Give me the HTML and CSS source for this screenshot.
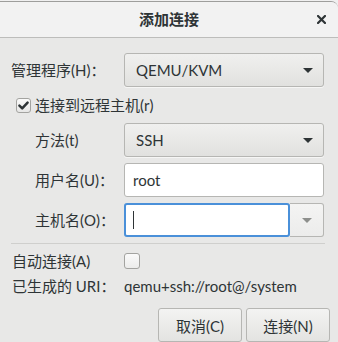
FILE: index.html
```html
<!DOCTYPE html>
<html lang="zh-CN">
<head>
<meta charset="utf-8">
<title>添加连接</title>
<link rel="stylesheet" href="styles.css">
</head>
<body>
<div class="window">
  <div class="header">
    <div></div>
    <div class="title">添加连接</div>
    <div class="close-wrap">
      <svg class="close" width="9" height="9" viewBox="0 0 9 9"><path d="M1 1L8 8M8 1L1 8" stroke="#2e3436" stroke-width="2.2" stroke-linecap="square" fill="none"/></svg>
    </div>
  </div>
  <div class="content">
    <div class="form">
      <div class="label">管理程序(H)：</div>
      <div class="combo"><span>QEMU/KVM</span><span class="arrow"></span></div>

      <div class="check-row">
        <svg class="cb" width="15" height="15" viewBox="0 0 15 15">
          <defs><linearGradient id="g1" x1="0" y1="0" x2="0" y2="1"><stop offset="0" stop-color="#fbfbfb"/><stop offset="1" stop-color="#e6e6e5"/></linearGradient></defs>
          <rect x="0.5" y="0.5" width="14" height="14" rx="2.5" fill="url(#g1)" stroke="#a3a3a0"/>
          <path d="M3.4 7.6L6.2 10.3L11.6 4.6" stroke="#2e3436" stroke-width="2.5" fill="none" stroke-linecap="round" stroke-linejoin="round"/>
        </svg>
        <span>连接到远程主机(r)</span>
      </div>

      <div class="label indent">方法(t)</div>
      <div class="combo"><span>SSH</span><span class="arrow"></span></div>

      <div class="label indent">用户名(U)：</div>
      <div class="entry"><span>root</span></div>

      <div class="label indent">主机名(O)：</div>
      <div class="entry-combo">
        <div class="entry focused"><span class="cursor"></span></div>
        <div class="drop"><span class="arrow dim"></span></div>
      </div>
    </div>

    <div class="sep"></div>

    <div class="form2">
      <div class="label small">自动连接(A)</div>
      <div class="cell"><span class="cb-empty"></span></div>
      <div class="label small">已生成的 URI：</div>
      <div class="cell uri">qemu+ssh://root@/system</div>
    </div>

    <div class="buttons">
      <div class="btn">取消(C)</div>
      <div class="btn">连接(N)</div>
    </div>
  </div>
</div>
</body>
</html>
```

FILE: styles.css
```css
html {
  background: #f0f0f0;
}
body {
  margin: 0;
  width: 338px;
  height: 342px;
  overflow: hidden;
  font-family: "Lato", "Noto Sans CJK SC", sans-serif;
  font-size: 15px;
  color: #2e3436;
  background: #f0f0f0;
}
.window {
  margin-top: 1px;
  border-top: 1px solid #9e9e9c;
  border-top-right-radius: 7px;
  background: #e8e8e7;
  height: 340px;
  overflow: hidden;
}
.header {
  height: 35px;
  border-bottom: 1px solid #bdbdbb;
  background: #f2f2f2;
  display: grid;
  grid-template-columns: 1fr auto 1fr;
  align-items: center;
}
.title {
  font-weight: bold;
  font-size: 15px;
  line-height: 1;
}
.close-wrap {
  display: flex;
  justify-content: flex-end;
  padding-right: 12px;
}
.close {
  display: block;
}
.content {
  padding: 15px 13px 0 11px;
}
.form {
  display: grid;
  grid-template-columns: 113px 200px;
  grid-template-rows: 34px 24px 34px 34px 34px;
  row-gap: 6px;
}
.label {
  align-self: center;
  line-height: 1;
  white-space: nowrap;
}
.label.indent {
  padding-left: 24px;
}
.label.small {
  padding-left: 1px;
}
.combo {
  display: flex;
  align-items: center;
  justify-content: space-between;
  padding: 0 10px 0 11px;
  border: 1px solid #b6b6b3;
  border-radius: 3px;
  background: linear-gradient(#f0f0ef, #e1e1df);
  box-shadow: 0 1px 0 rgba(255,255,255,0.6);
}
.arrow {
  width: 0;
  height: 0;
  border-left: 5px solid transparent;
  border-right: 5px solid transparent;
  border-top: 5px solid #2e3436;
}
.arrow.dim {
  border-top-color: #8d8f8c;
}
.check-row {
  grid-column: 1 / 3;
  display: flex;
  align-items: center;
  gap: 4px;
  padding-left: 5px;
  line-height: 1;
}
.cb {
  display: block;
}
.entry {
  display: flex;
  align-items: center;
  background: #fff;
  border: 1px solid #b6b6b3;
  border-radius: 3px;
  padding-left: 8px;
}
.entry-combo {
  display: flex;
}
.entry.focused {
  flex: 1;
  border: 2px solid #4a90d9;
  padding-left: 7px;
}
.cursor {
  width: 1px;
  height: 18px;
  background: #2e3436;
}
.drop {
  width: 33px;
  display: flex;
  align-items: center;
  justify-content: center;
  border: 1px solid #b6b6b3;
  border-left: none;
  border-radius: 0 3px 3px 0;
  background: linear-gradient(#f4f4f3, #ececeb);
}
.sep {
  margin-top: 6px;
  height: 1px;
  background: #cfcfcd;
}
.form2 {
  display: grid;
  grid-template-columns: 113px 200px;
  grid-template-rows: 24px 26px;
  margin-top: 5px;
}
.cell {
  display: flex;
  align-items: center;
}
.cb-empty {
  width: 14px;
  height: 14px;
  border: 1px solid #a3a3a0;
  border-radius: 3px;
  background: linear-gradient(#fafafa, #ececeb);
}
.uri {
  line-height: 1;
}
.buttons {
  display: flex;
  justify-content: flex-end;
  gap: 4px;
  margin-top: 9px;
  margin-right: -5px;
}
.btn {
  height: 34px;
  box-sizing: border-box;
  width: 84px;
  display: flex;
  align-items: center;
  justify-content: center;
  border: 1px solid #b6b6b3;
  border-radius: 3px;
  background: linear-gradient(#f3f3f2, #e3e3e1);
  font-size: 15px;
}
```
